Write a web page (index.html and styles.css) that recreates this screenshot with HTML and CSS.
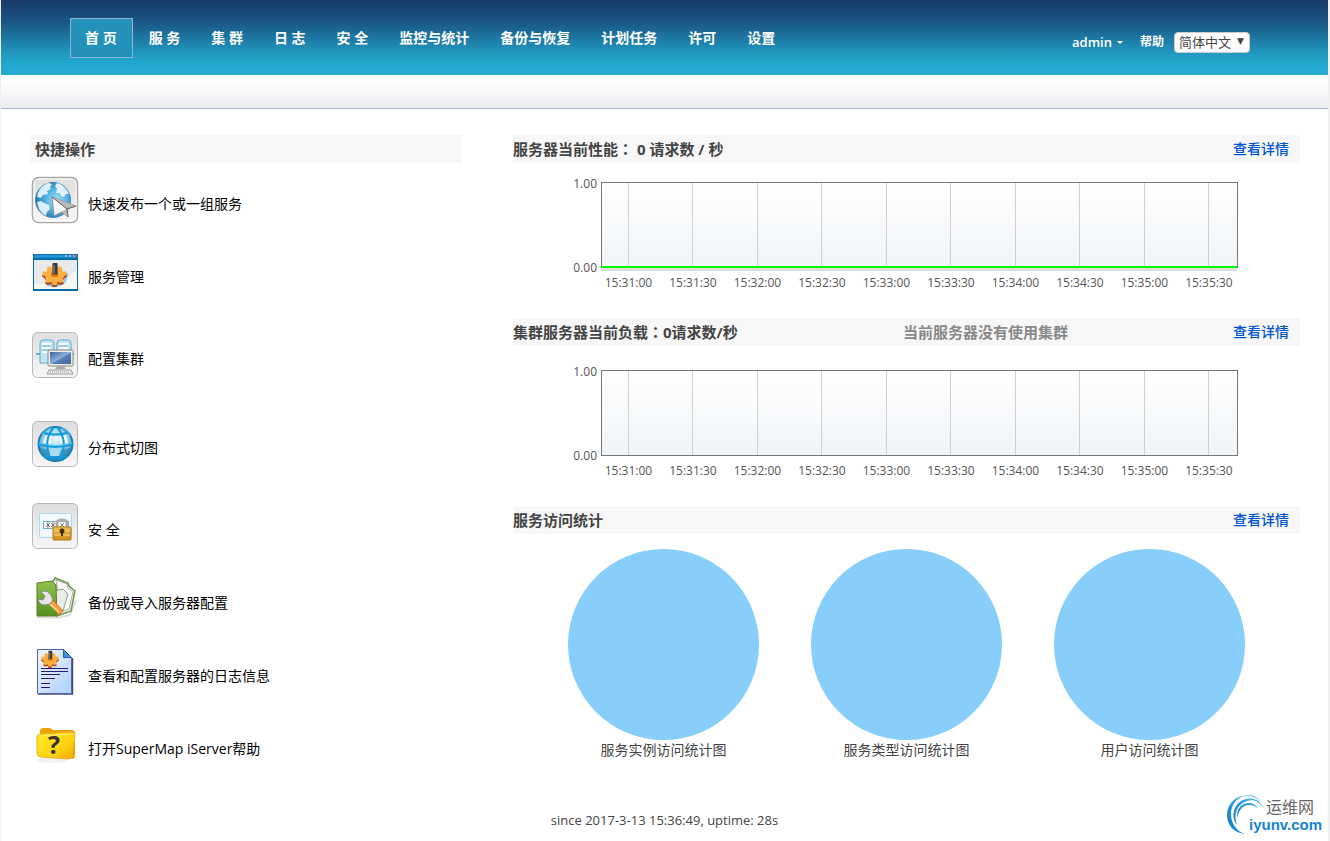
FILE: index.html
```html
<!DOCTYPE html>
<html lang="zh-CN">
<head>
<meta charset="utf-8">
<title>SuperMap iServer</title>
<link rel="stylesheet" href="styles.css">
</head>
<body>
<svg class="defs" aria-hidden="true">
<defs>
<linearGradient id="g_tile" x1="0" y1="0" x2="0" y2="1"><stop offset="0" stop-color="#dedede"/><stop offset="1" stop-color="#f6f6f6"/></linearGradient>
<radialGradient id="g_globe" cx=".6" cy=".5" r=".6"><stop offset="0" stop-color="#a9e2f8"/><stop offset=".5" stop-color="#55b4e4"/><stop offset="1" stop-color="#2470ae"/></radialGradient>
<radialGradient id="g_ball" cx=".5" cy=".35" r=".65"><stop offset="0" stop-color="#e9f8fd"/><stop offset=".6" stop-color="#8cc9e2"/><stop offset="1" stop-color="#1d6f9f"/></radialGradient>
<linearGradient id="g_bar" x1="0" y1="0" x2="0" y2="1"><stop offset="0" stop-color="#0b5ea0"/><stop offset=".4" stop-color="#2aa4e8"/><stop offset="1" stop-color="#0068a8"/></linearGradient>
<linearGradient id="g_screen" x1="0" y1="0" x2="1" y2="1"><stop offset="0" stop-color="#3c6399"/><stop offset=".5" stop-color="#8fb0d8"/><stop offset=".55" stop-color="#587fb5"/><stop offset="1" stop-color="#3e66a0"/></linearGradient>
<linearGradient id="g_lock" x1="0" y1="0" x2="0" y2="1"><stop offset="0" stop-color="#f3c04e"/><stop offset="1" stop-color="#c98a1c"/></linearGradient>
<linearGradient id="g_green" x1="0" y1="0" x2="0" y2="1"><stop offset="0" stop-color="#93c24c"/><stop offset="1" stop-color="#568f20"/></linearGradient>
<linearGradient id="g_page" x1="0" y1="0" x2="1" y2="1"><stop offset="0" stop-color="#f4f8ff"/><stop offset=".7" stop-color="#c5dbfa"/><stop offset="1" stop-color="#a5cdf6"/></linearGradient>
<linearGradient id="g_folder" x1="0" y1="0" x2="1" y2="1"><stop offset="0" stop-color="#ffe92b"/><stop offset=".6" stop-color="#fdd40e"/><stop offset="1" stop-color="#f2a707"/></linearGradient>
<linearGradient id="g_swirl" x1="1" y1="0" x2="0" y2="1"><stop offset="0" stop-color="#4cc0f2"/><stop offset="1" stop-color="#0874c4"/></linearGradient>
<path id="cog" d="M5 5l3-1 2 2h4l2-2 3 1 0 3 1 1 3 0 1 3-3 2-1 2 1 3-3 1-3-1-1 3-4 0-1-3-3 1-3-1 1-3-1-2-3-2 1-3 3 0 1-1z"/>
<symbol id="gear" viewBox="0 0 24 24">
<use href="#cog" y="2" fill="#b5441a"/>
<use href="#cog" fill="#fbb040"/>
<ellipse cx="12" cy="12" rx="3.500" ry="2.500" fill="#d97a1c"/>
<rect x="10" y="1" width="5" height="11" rx="1" fill="#3a3a3a"/>
<path d="M11.500 3v8" stroke="#999"/>
</symbol>
</defs>
</svg>

<div class="page">
<header class="top">
<nav class="menu">
<a href="#" class="current">首 页</a>
<a href="#">服 务</a>
<a href="#">集 群</a>
<a href="#">日 志</a>
<a href="#">安 全</a>
<a href="#">监控与统计</a>
<a href="#">备份与恢复</a>
<a href="#">计划任务</a>
<a href="#">许可</a>
<a href="#">设置</a>
</nav>
<div class="user">
<a href="#" class="account">admin</a>
<a href="#">帮助</a>
<div class="lang"><select aria-label="语言"><option>简体中文</option><option>English</option></select></div>
</div>
</header>
<div class="subbar"></div>

<main class="m_body">
<section>
<div class="hdr hdr_left"><h2>快捷操作</h2></div>
<ul class="quick">
<li>
<svg viewBox="0 0 46 46">
<rect x=".5" y=".5" width="45" height="45" rx="6" fill="url(#g_tile)" stroke="#a8a8a8" stroke-width="1.500"/>
<rect x="2" y="2" width="42" height="42" rx="5" fill="none" stroke="#fff"/>
<circle cx="21" cy="23" r="17.500" fill="url(#g_globe)" stroke="#3d86bd"/>
<path d="M6 16c2-5 5-8 10-10l4 1-2 3 1 2-4 2 1 3-5 1-2 3-4-1zM5 25l4-1 3 2 5 2 1 4-3 3-1 4-4-3-3-4zM25 6c5 1 9 5 12 11l-3 0-2 3-3-1-1-3-4 0 1-4-2-3z" fill="#eefaff" opacity=".9"/>
<path d="M20 20l24 9-9 3 1 8-6-5-8 4z" fill="#f7f7f7" stroke="#8a8a8a"/>
<path d="M20 20l15 12 9-3zM30 34l6 6-1-8z" fill="#b9b9b9"/>
<path d="M20 20l15 12 9-3M35 32l1 8" fill="none" stroke="#666"/>
</svg>
<a href="#">快速发布一个或一组服务</a>
</li>
<li class="roomy">
<svg viewBox="0 0 46 46">
<rect x="1" y="4" width="45" height="37" fill="#006aa8"/>
<rect x="2" y="4" width="43" height="5" rx="1" fill="url(#g_bar)"/>
<path d="M33 6h2m2 0h2" stroke="#d9efff"/><path d="M41 5l2 2" stroke="#f66" stroke-width="2"/>
<rect x="2" y="10" width="43" height="29" fill="#e7e9eb"/>
<path d="M2 33q22 5 43-13v19H2z" fill="#f7f6f1"/>
<path d="M15 34q10 4 18-3l2-8" fill="none" stroke="#9ccbef" stroke-width="3"/>
<use href="#gear" x="10" y="12" width="25" height="25"/>
</svg>
<a href="#">服务管理</a>
</li>
<li class="roomiest">
<svg viewBox="0 0 46 46">
<rect x=".5" y=".5" width="45" height="45" rx="5" fill="url(#g_tile)" stroke="#b8b8b8"/>
<path d="M4 22h38" stroke="#64a9cb" stroke-width="2"/>
<path d="M8 31V11q0-3 3-3h8q3 0 3 3v20zM25 31V11q0-3 3-3h8q3 0 3 3v20z" fill="#bfe4f3" stroke="#5eaed1"/>
<path d="M10 12h9m-9 4h9m-9 4h7M27 12h9m-9 4h9" stroke="#fff" stroke-width="2"/>
<path d="M10 14h9m-9 4h9M27 14h9" stroke="#6db4d4"/>
<rect x="16" y="18" width="25" height="16" rx="1" fill="#ededeb" stroke="#888"/>
<rect x="18" y="20" width="21" height="12" fill="url(#g_screen)"/>
<path d="M25 34h7l2 3H23z" fill="#aaa"/>
<path d="M17 38h22l2 4H15z" fill="#eee" stroke="#999"/>
<path d="M18 40h20" stroke="#999" stroke-dasharray="1 1"/>
</svg>
<a href="#">配置集群</a>
</li>
<li class="roomy">
<svg viewBox="0 0 46 46">
<rect x=".5" y=".5" width="45" height="45" rx="5" fill="url(#g_tile)" stroke="#b8b8b8"/>
<circle cx="23.500" cy="23" r="17" fill="url(#g_ball)" stroke="#177fb9" stroke-width="2"/>
<path d="M8 27q15 4 31 0-4 12-15 13Q12 39 8 27" fill="#2a86b5" opacity=".65"/>
<path d="M17 28h12l-2 7h-9z" fill="#a8dcf0"/>
<path d="M13 15l7-1-1 9-8-1zM27 15l7-1 2 8-8 1z" fill="#f4fcff"/>
<path d="M6 23q17 6 35 0M12 12q11 3 23 0M12 35q11 3 23 0M22 6q-12 14-3 33M25 6q12 14 3 33" fill="none" stroke="#129bdd" stroke-width="2"/>
<path d="M7 22q17 5 33 0M10 14q2-5 9-7M29 7q7 2 9 8" fill="none" stroke="#54c9f7"/>
</svg>
<a href="#">分布式切图</a>
</li>
<li>
<svg viewBox="0 0 46 46">
<rect x=".5" y=".5" width="45" height="45" rx="5" fill="url(#g_tile)" stroke="#b8b8b8"/>
<rect x="7.500" y="10.500" width="32" height="24" rx="1" fill="#f3faff" stroke="#a5daf0"/>
<rect x="11.500" y="18.500" width="25" height="7" fill="#fff" stroke="#6ab0ce"/>
<path d="M14 20l4 4m0-4l-4 4m2-5v6M19 20l4 4m0-4l-4 4m2-5v6M28 20l4 4m0-4l-4 4" stroke="#666" stroke-width=".8"/>
<path d="M25 25v-5q0-3 5-3t5 3v5" fill="none" stroke="#aaa" stroke-width="3"/>
<rect x="21" y="24" width="18" height="13" rx="1" fill="url(#g_lock)" stroke="#b67a17"/>
<path d="M22 28h16m-16 4h16" stroke="#f8d980"/>
<circle cx="30" cy="28" r="2.500" fill="#402c10"/><path d="M30 28v5" stroke="#402c10" stroke-width="2"/>
</svg>
<a href="#">安 全</a>
</li>
<li>
<svg viewBox="0 0 46 46">
<path d="M5 41l20 1 13-3 6-15" fill="none" stroke="#ddd" stroke-width="2"/>
<path d="M20 7l3-5 13 5 1 3 6 5-4 20-14 5z" fill="#f2f4f0" stroke="#68954c" stroke-width="1.500"/>
<path d="M24 4l11 4 1 4 5 4-4 17-8 3z" fill="#fafafa" stroke="#aaa"/>
<path d="M22 15l9-2 5 5-5 17-8 2z" fill="#e8ebe6" stroke="#89a579"/>
<path d="M5 7l15-2 4 4 1 31-20 0z" fill="url(#g_green)" stroke="#557e2d"/>
<path d="M16 26l11 13 4-4-12-13z" fill="#f69c35" stroke="#d47618"/>
<path d="M18 28l9 8" stroke="#ffd38a" stroke-width="2"/>
<path d="M9 16l4 4-2 4-5-1q1 6 7 6l5-1 3-4-2-5q-3-5-8-4z" fill="#e4e4e4" stroke="#888"/>
</svg>
<a href="#">备份或导入服务器配置</a>
</li>
<li>
<svg viewBox="0 0 46 46">
<path d="M40.500 9v36H6" fill="none" stroke="#444a75" stroke-width="1.500"/>
<path d="M5.500 .5h26l8 8v36h-34z" fill="url(#g_page)" stroke="#5062b5"/>
<path d="M39 23v21H18z" fill="#b4daff" opacity=".6"/>
<path d="M31.500 .5v8h8z" fill="#3e92d6" stroke="#2c5ba4"/>
<use href="#gear" x="9" y="1" width="18" height="18"/>
<path d="M9 19.500h27M9 22.500h27M9 25.500h19M9 29.500h14M9 34.500h9M9 38.500h9" stroke="#251a79"/>
</svg>
<a href="#">查看和配置服务器的日志信息</a>
</li>
<li>
<svg viewBox="0 0 46 46">
<ellipse cx="20" cy="38" rx="15" ry="3" fill="#f0f0f0"/>
<path d="M8 15V9q0-3 3-3h7l3 2h19q3 0 3 3v22q0 4-3 4z" fill="#e9a20c"/>
<path d="M8 12l32-2q3 0 3 4l-3 20q0 3-4 3L9 35q-3 0-4-3L5 15q0-3 3-3z" fill="url(#g_folder)" stroke="#edb31c"/>
<path d="M7 14q17-1 34-2" fill="none" stroke="#fff16f"/>
<text x="16" y="32" class="ask">?</text>
</svg>
<a href="#">打开SuperMap iServer帮助</a>
</li>
</ul>
</section>

<section>
<div class="hdr"><h2>服务器当前性能<span class="colon" lang="zh-TW">：</span> 0 请求数 / 秒</h2><a href="#">查看详情</a></div>
<div class="chart">
<svg width="100%" height="85" role="img" aria-label="服务器当前性能">
<g class="grid">
<line x1="4.320%" x2="4.320%" y2="85"/><line x1="14.460%" x2="14.460%" y2="85"/><line x1="24.600%" x2="24.600%" y2="85"/><line x1="34.740%" x2="34.740%" y2="85"/><line x1="44.880%" x2="44.880%" y2="85"/><line x1="55.020%" x2="55.020%" y2="85"/><line x1="65.160%" x2="65.160%" y2="85"/><line x1="75.300%" x2="75.300%" y2="85"/><line x1="85.440%" x2="85.440%" y2="85"/><line x1="95.580%" x2="95.580%" y2="85"/>
</g>
<rect class="frame" width="100%" height="85"/>
<rect class="shade" y="86" width="100%" height="3"/>
<rect class="series" y="84" width="100%" height="2"/>
<g class="ylab"><text x="-4" y="6">1.00</text><text x="-4" y="90">0.00</text></g>
<g class="xlab"><text x="4.320%" y="105">15:31:00</text><text x="14.460%" y="105">15:31:30</text><text x="24.600%" y="105">15:32:00</text><text x="34.740%" y="105">15:32:30</text><text x="44.880%" y="105">15:33:00</text><text x="55.020%" y="105">15:33:30</text><text x="65.160%" y="105">15:34:00</text><text x="75.300%" y="105">15:34:30</text><text x="85.440%" y="105">15:35:00</text><text x="95.580%" y="105">15:35:30</text></g>
</svg>
</div>

<div class="hdr"><h2>集群服务器当前负载<span class="colon" lang="zh-TW">：</span>0请求数/秒</h2><span class="note">当前服务器没有使用集群</span><a href="#">查看详情</a></div>
<div class="chart chart_cluster">
<svg width="100%" height="85" role="img" aria-label="集群服务器当前负载">
<g class="grid">
<line x1="4.320%" x2="4.320%" y2="85"/><line x1="14.460%" x2="14.460%" y2="85"/><line x1="24.600%" x2="24.600%" y2="85"/><line x1="34.740%" x2="34.740%" y2="85"/><line x1="44.880%" x2="44.880%" y2="85"/><line x1="55.020%" x2="55.020%" y2="85"/><line x1="65.160%" x2="65.160%" y2="85"/><line x1="75.300%" x2="75.300%" y2="85"/><line x1="85.440%" x2="85.440%" y2="85"/><line x1="95.580%" x2="95.580%" y2="85"/>
</g>
<rect class="frame" width="100%" height="85"/>
<g class="ylab"><text x="-4" y="6">1.00</text><text x="-4" y="90">0.00</text></g>
<g class="xlab"><text x="4.320%" y="105">15:31:00</text><text x="14.460%" y="105">15:31:30</text><text x="24.600%" y="105">15:32:00</text><text x="34.740%" y="105">15:32:30</text><text x="44.880%" y="105">15:33:00</text><text x="55.020%" y="105">15:33:30</text><text x="65.160%" y="105">15:34:00</text><text x="75.300%" y="105">15:34:30</text><text x="85.440%" y="105">15:35:00</text><text x="95.580%" y="105">15:35:30</text></g>
</svg>
</div>

<div class="hdr"><h2>服务访问统计</h2><a href="#">查看详情</a></div>
<div class="pies">
<figure><div class="pie"></div><figcaption>服务实例访问统计图</figcaption></figure>
<figure><div class="pie"></div><figcaption>服务类型访问统计图</figcaption></figure>
<figure><div class="pie"></div><figcaption>用户访问统计图</figcaption></figure>
</div>
</section>
</main>

<footer>since 2017-3-13 15:36:49, uptime: 28s</footer>
</div>

<svg class="brand" viewBox="0 0 100 42" role="img" aria-label="运维网 iyunv.com">
<path d="M19 40C8 39 1 31 1 21 1 9 11 0 23 2 12 1 5 10 5 20c0 9 5 17 14 20z" fill="url(#g_swirl)"/>
<path d="M11 31C4 22 8 8 20 5c8-2 15 2 17 9C33 7 27 5 21 7 11 10 7 20 11 31z" fill="url(#g_swirl)"/>
<path d="M12 25C9 15 16 9 23 9c4 0 7 2 9 5-3-2-6-3-9-3-6 0-12 6-11 14zM17 2c8-2 14 0 18 6-5-5-10-7-18-6z" fill="url(#g_swirl)"/>
<text x="40" y="19" class="brand_cn">运维网</text>
<text x="23" y="36" class="brand_en">iyunv.com</text>
</svg>
</body>
</html>
```
FILE: styles.css
```css
* {box-sizing:border-box;}
body {margin:0;background:#f0f0f0;color:#444;font:14px/20px "Open Sans","Noto Sans CJK SC",sans-serif;}
a {text-decoration:none;}
.defs {position:absolute;width:0;height:0;}
.page {margin:0 2px 0 1px;min-height:100vh;background:#fff;}

.top {display:flex;justify-content:space-between;height:75px;padding:18px 78px 0 69px;background:linear-gradient(#183a68,#1b5484 28%,#209ac0 72%,#23a7ce 85%,#26abd3);}
.menu {display:flex;gap:1px;}
.menu a {height:40px;padding:0 14px;border:1px solid transparent;line-height:38px;font-weight:bold;color:#fff;white-space:nowrap;}
.menu a.current {padding-right:15px;background:#2391ba;border-color:#8cb5d3;}
.user {display:flex;align-items:center;height:20px;margin-top:14px;}
.user a {color:#fff;font-size:12px;font-weight:600;margin-right:10px;}
.user a.account {font-size:13px;margin-right:17px;}
.account::after {content:"";display:inline-block;margin-left:5px;vertical-align:3px;border:3px solid transparent;border-top-color:#fff;border-bottom:0;}
.lang {position:relative;}
.lang select {display:block;appearance:none;width:76px;height:21px;padding:0 4px;border:1px solid #ccc;border-radius:4px;background:#fff;color:#444;font:13px/18px "Open Sans","Noto Sans CJK SC",sans-serif;}
.lang::after {content:"▼";position:absolute;right:6px;top:0;font:9px/19px "DejaVu Sans",sans-serif;color:#444;pointer-events:none;}
.subbar {height:34px;background:linear-gradient(#fff 15%,#ebedf1);border-bottom:1px solid #a9b8cd;}

.m_body {display:grid;grid-template-columns:432fr 787fr;gap:51px;padding:26px 28px 0 29px;}
.hdr {display:flex;justify-content:space-between;align-items:center;height:28px;padding-right:11px;background:#f7f7f7;}
.hdr_left {padding-left:5px;}
.hdr h2 {margin:0;font-size:15px;line-height:28px;font-weight:bold;}
.hdr a {font-size:14px;font-weight:500;color:#0053cf;}
.colon {font-family:"Noto Sans CJK TC",sans-serif;}
.note {font-size:15px;font-weight:bold;color:#888;}

.quick {list-style:none;margin:14px 0 0;padding:0;}
.quick li {display:flex;align-items:center;gap:10px;height:46px;margin:0 0 27px 2px;}
.quick li.roomy {margin-bottom:36px;}
.quick li.roomiest {margin-bottom:43px;}
.quick svg {width:46px;height:46px;flex:none;overflow:visible;}
.quick a {padding-top:8px;color:#000;}
.ask {font:bold 25px "Open Sans",sans-serif;fill:#333;}

.chart {height:155px;padding:19px 63px 0 88px;}
.chart_cluster {height:160px;padding-top:24px;}
.chart svg {display:block;overflow:visible;background:linear-gradient(#fff,#f0f4f8);}
.grid line {stroke:#d0d0d0;shape-rendering:crispEdges;}
.frame {fill:none;stroke:#777;shape-rendering:crispEdges;}
.series {fill:#0f0;}
.shade {fill:#ddd;}
.xlab, .ylab {font-size:12px;fill:#555;}
.xlab {text-anchor:middle;}
.ylab {text-anchor:end;}

.pies {display:grid;grid-template-columns:repeat(3,1fr);padding:15px 29px 0;}
.pies figure {margin:0;text-align:center;}
.pie {width:191px;height:191px;margin:0 auto;border-radius:50%;background:#87cefa;}

footer {padding:15px 0 10px;text-align:center;font-size:13px;}
.brand {position:absolute;right:4px;top:794px;width:100px;height:42px;}
.brand_cn {font:16px "Noto Sans CJK SC",sans-serif;fill:#666;}
.brand_en {font:bold 15px "Liberation Sans",sans-serif;fill:#1483d3;}
```
